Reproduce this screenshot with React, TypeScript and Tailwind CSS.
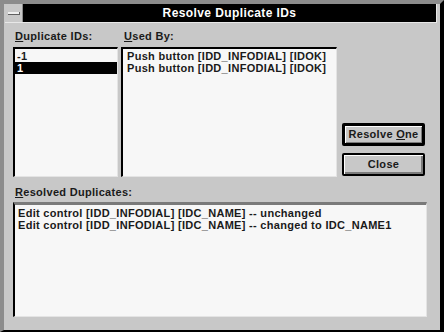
const font = { fontFamily: '"Liberation Sans", Arial, sans-serif' };

const ListBox = ({ className, children }: { className: string; children?: React.ReactNode }) => (
	<div
		className={`bg-[#f7f7f7] border-t-2 border-l-2 border-black border-r border-b border-r-[#e4e4e4] border-b-[#e4e4e4] pt-[1px] ${className}`}
	>
		{children}
	</div>
);

const Item = ({ text, selected }: { text: string; selected?: boolean }) => (
	<div
		className={`h-[12px] leading-[12px] pl-[2px] whitespace-nowrap ${selected ? "bg-black text-white" : "text-[#1a1a1a]"}`}
	>
		{text}
	</div>
);

const Button = ({ children, isDefault }: { children: React.ReactNode; isDefault?: boolean }) => (
	<div
		className={`h-[23px] w-[83px] flex items-center justify-center bg-[#c8c8c8] rounded-[2px] text-[#1a1a1a] ${isDefault
			? "border-[3px] border-black shadow-[inset_1px_1px_0_#ffffff,inset_-1px_-1px_0_#7c7c7c]"
			: "border-2 border-black shadow-[inset_1px_1px_0_#ffffff,inset_-2px_-2px_0_#7c7c7c]"
			}`}
	>
		{children}
	</div>
);

export default function App() {
	return (
		<div
			style={font}
			className="w-[444px] h-[332px] flex flex-col bg-[#c8c8c8] border-l-4 border-t-4 border-l-[#8c8c8c] border-t-[#8c8c8c] border-r-4 border-r-black border-b-2 border-b-black text-[11px] tracking-[0.3px] font-bold overflow-hidden"
		>
			{/* title bar */}
			<div className="h-[19px] ml-[1px] mr-[3px] flex border-b border-r border-[#e8e8e8]">
				<div className="w-[18px] h-full bg-[#c8c8c8] flex items-center justify-center border-r border-[#8c8c8c]">
					<div className="w-[12px] h-[3px] bg-[#f0f0f0] border-b border-r border-[#606060]" />
				</div>
				<div className="flex-1 bg-black text-white text-[12px] tracking-[0.4px] flex items-center justify-center">
					Resolve Duplicate IDs
				</div>
			</div>

			{/* upper section */}
			<div className="flex mt-[7px] ml-[9px]">
				<div className="flex flex-col w-[105px]">
					<div className="h-[17px] leading-[13px] pl-[2px] text-[#1a1a1a]">
						<span className="underline">D</span>uplicate IDs:
					</div>
					<ListBox className="h-[130px]">
						<Item text="-1" />
						<Item text="1" selected />
					</ListBox>
				</div>
				<div className="flex flex-col w-[216px] ml-[3px]">
					<div className="h-[17px] leading-[13px] pl-[3px] text-[#1a1a1a]">
						<span className="underline">U</span>sed By:
					</div>
					<ListBox className="h-[130px] pl-[2px]">
						<Item text="Push button [IDD_INFODIAL] [IDOK]" />
						<Item text="Push button [IDD_INFODIAL] [IDOK]" />
					</ListBox>
				</div>
				<div className="flex flex-col justify-end gap-[7px] ml-[5px] pb-[1px]">
					<Button isDefault>
						<span>
							Resolve <span className="underline">O</span>ne
						</span>
					</Button>
					<Button>Close</Button>
				</div>
			</div>

			{/* lower section */}
			<div className="flex flex-col mt-[9px] ml-[9px] w-[414px]">
				<div className="h-[16px] leading-[13px] pl-[2px] text-[#1a1a1a]">
					<span className="underline">R</span>esolved Duplicates:
				</div>
				<div className="h-[115px] bg-[#f7f7f7] border-t-[3px] border-t-[#7a7a7a] border-l-2 border-l-black border-r border-b border-r-[#e4e4e4] border-b-[#e4e4e4] pt-[2px] pl-[1px]">
					<Item text="Edit control [IDD_INFODIAL] [IDC_NAME] -- unchanged" />
					<Item text="Edit control [IDD_INFODIAL] [IDC_NAME] -- changed to IDC_NAME1" />
				</div>
			</div>
		</div>
	);
}
